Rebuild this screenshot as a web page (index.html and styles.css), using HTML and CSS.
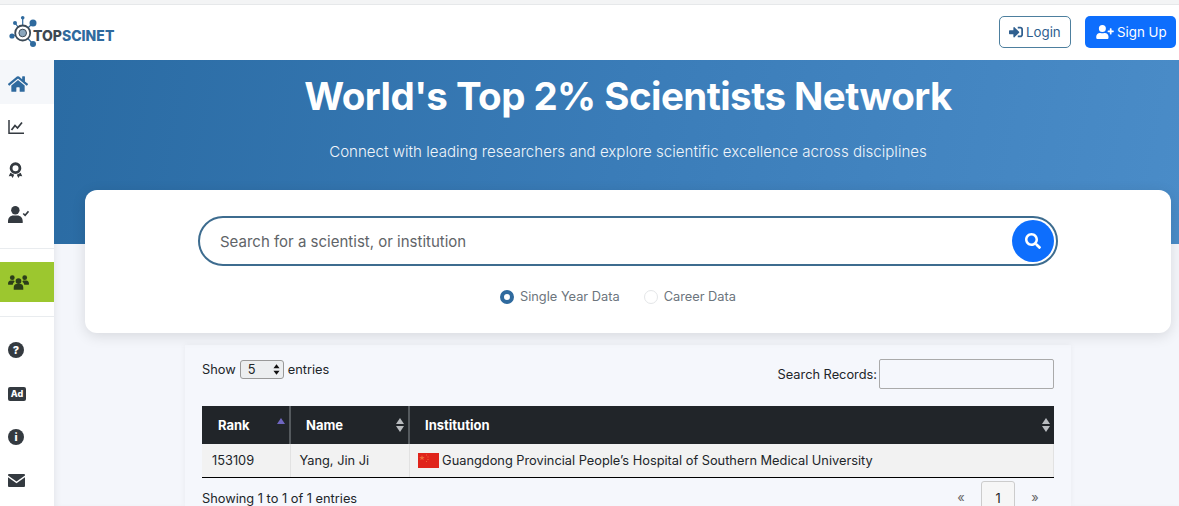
FILE: index.html
```html
<!DOCTYPE html>
<html lang="en">
<head>
    <meta charset="UTF-8">
    <meta name="viewport" content="width=device-width, initial-scale=1.0">
    <title>TopSciNet</title>
    <link rel="stylesheet" href="styles.css">
</head>
<body>
    <header class="topbar">
        <a class="logo" href="#">
            <svg class="logo-mark" viewBox="0 0 30 32" width="30" height="32">
                <g stroke="#2f6a9e" stroke-width="1.2">
                    <line x1="13.700" y1="17" x2="13.700" y2="1.500"/>
                    <line x1="13.700" y1="17" x2="24" y2="7"/>
                    <line x1="13.700" y1="17" x2="6" y2="7"/>
                    <line x1="13.700" y1="17" x2="3" y2="20"/>
                    <line x1="13.700" y1="17" x2="24" y2="28"/>
                </g>
                <circle cx="13.700" cy="1.800" r="1.800" fill="#2f6a9e"/>
                <circle cx="24" cy="7" r="3.500" fill="#2f6a9e"/>
                <circle cx="6" cy="7" r="2" fill="#2f6a9e"/>
                <circle cx="3" cy="20" r="2.600" fill="#2f6a9e"/>
                <circle cx="24" cy="28" r="3" fill="#2f6a9e"/>
                <circle cx="13.700" cy="17" r="7.500" fill="#fff" stroke="#3c4a57" stroke-width="1.800"/>
                <circle cx="13.700" cy="17" r="3.800" fill="#8aa6bd" stroke="#3c4a57" stroke-width="1"/>
            </svg>
            <span class="logo-text"><span class="logo-top">TOP</span>SCINET</span>
        </a>
        <div class="auth">
            <a class="btn btn-login" href="#">
                <svg viewBox="0 0 512 512" width="14" height="14"><path fill="currentColor" d="M416 448h-84c-6.600 0-12-5.400-12-12v-40c0-6.600 5.400-12 12-12h84c17.700 0 32-14.300 32-32V160c0-17.700-14.300-32-32-32h-84c-6.600 0-12-5.400-12-12V76c0-6.600 5.400-12 12-12h84c53 0 96 43 96 96v192c0 53-43 96-96 96zm-47-201L201 79c-15-15-41-4.500-41 17v96H24c-13.300 0-24 10.700-24 24v96c0 13.300 10.700 24 24 24h136v96c0 21.500 26 32 41 17l168-168c9.300-9.400 9.300-24.600 0-34z"/></svg>
                Login
            </a>
            <a class="btn btn-signup" href="#">
                <svg viewBox="0 0 640 512" width="18" height="14"><path fill="currentColor" d="M224 256a128 128 0 1 0 0-256 128 128 0 0 0 0 256zm90 32h-17a174 174 0 0 1-146 0h-17C60 288 0 348 0 422v42c0 26 22 48 48 48h352c26 0 48-22 48-48v-42c0-74-60-134-134-134zM624 200h-64v-64c0-9-7-16-16-16h-32c-9 0-16 7-16 16v64h-64c-9 0-16 7-16 16v32c0 9 7 16 16 16h64v64c0 9 7 16 16 16h32c9 0 16-7 16-16v-64h64c9 0 16-7 16-16v-32c0-9-7-16-16-16z"/></svg>
                Sign Up
            </a>
        </div>
    </header>

    <div class="layout">
        <nav class="sidebar">
            <a class="nav-item nav-home" href="#">
                <svg viewBox="0 0 576 512" width="20" height="18"><path fill="#2f6a9e" d="M280.37 148.26L96 300.11V464a16 16 0 0 0 16 16l112.06-.29a16 16 0 0 0 15.92-16V368a16 16 0 0 1 16-16h64a16 16 0 0 1 16 16v95.64a16 16 0 0 0 16 16.05L464 480a16 16 0 0 0 16-16V300L295.67 148.26a12.19 12.19 0 0 0-15.3 0zM571.6 251.47L488 182.56V44.05a12 12 0 0 0-12-12h-56a12 12 0 0 0-12 12v72.61L318.47 43a48 48 0 0 0-61 0L4.34 251.47a12 12 0 0 0-1.6 16.9l25.5 31A12 12 0 0 0 45.15 301l235.22-193.74a12.19 12.19 0 0 1 15.3 0L530.9 301a12 12 0 0 0 16.9-1.6l25.5-31a12 12 0 0 0-1.7-16.93z"/></svg>
            </a>
            <a class="nav-item" href="#">
                <svg viewBox="0 0 16 16" width="16" height="16" fill="none" stroke="#343a40" stroke-width="1.5"><path d="M1 1v13.200h15"/><path d="M3.500 11l3.500-4.500 2.500 2.500L14 3.500" stroke-width="1.700"/></svg>
            </a>
            <a class="nav-item" href="#">
                <svg viewBox="0 0 16 18" width="15" height="17"><circle cx="8" cy="6.500" r="4.700" fill="none" stroke="#343a40" stroke-width="3"/><path fill="#343a40" d="M2.500 11.500L.8 15l2.700-.2 1.500 2.200 1.600-3.500zM13.500 11.500l1.700 3.500-2.700-.2-1.500 2.200-1.600-3.500z"/></svg>
            </a>
            <a class="nav-item" href="#">
                <svg viewBox="0 0 20 16" width="21" height="17"><circle cx="7" cy="4" r="4" fill="#343a40"/><path fill="#343a40" d="M0 14.500C0 11 2.500 9 5 9h4c2.500 0 5 2 5 5.500V16H0z"/><path fill="none" stroke="#343a40" stroke-width="1.500" d="M14.500 7l1.800 1.800L19.500 5"/></svg>
            </a>
            <div class="nav-divider"></div>
            <a class="nav-item nav-active" href="#">
                <svg viewBox="0 0 22 16" width="21" height="16" fill="#2c3e1a"><circle cx="4.500" cy="3.500" r="2.500"/><circle cx="17.500" cy="3.500" r="2.500"/><path d="M0 10c0-2 1-3.500 3-3.500h3l1 1C6 8.500 5.200 9.500 5 11H1a1 1 0 0 1-1-1zM22 10c0-2-1-3.500-3-3.500h-3l-1 1c1 1 1.800 2 2 3.500h4a1 1 0 0 0 1-1z"/><circle cx="11" cy="7" r="3"/><path d="M6 14c0-2 1-3.800 3-3.800h4c2 0 3 1.800 3 3.800v2H6z"/></svg>
            </a>
            <div class="nav-divider nav-divider-low"></div>
            <a class="nav-item" href="#"><span class="nav-round">?</span></a>
            <a class="nav-item" href="#"><span class="nav-ad">Ad</span></a>
            <a class="nav-item" href="#"><span class="nav-round">i</span></a>
            <a class="nav-item" href="#">
                <svg viewBox="0 0 17 13" width="17" height="13"><path fill="#343a40" d="M0 1a1 1 0 0 1 1-1h15a1 1 0 0 1 1 1v.5L8.500 7.500 0 1.500zM0 3.300v8.700a1 1 0 0 0 1 1h15a1 1 0 0 0 1-1V3.300L8.500 9.200z"/></svg>
            </a>
        </nav>

        <main class="content">
            <section class="hero">
                <h1>World's Top 2% Scientists Network</h1>
                <p>Connect with leading researchers and explore scientific excellence across disciplines</p>
            </section>

            <section class="search-card">
                <div class="search-pill">
                    <input class="search-input" type="text" placeholder="Search for a scientist, or institution">
                    <button class="search-btn">
                        <svg viewBox="0 0 512 512" width="16" height="16"><path fill="#fff" d="M505 442.700L405.300 343c-4.500-4.500-10.600-7-17-7H372c27.600-35.300 44-79.700 44-128C416 93.100 322.900 0 208 0S0 93.100 0 208s93.100 208 208 208c48.300 0 92.700-16.400 128-44v16.300c0 6.400 2.500 12.500 7 17l99.700 99.700c9.400 9.400 24.600 9.400 33.900 0l28.300-28.300c9.400-9.400 9.400-24.600.1-34zM208 336c-70.700 0-128-57.200-128-128 0-70.700 57.200-128 128-128 70.700 0 128 57.200 128 128 0 70.700-57.200 128-128 128z"/></svg>
                    </button>
                </div>
                <div class="year-options">
                    <label class="year-option"><span class="radio radio-on"></span>Single Year Data</label>
                    <label class="year-option"><span class="radio"></span>Career Data</label>
                </div>
            </section>

            <section class="records">
                <div class="records-top">
                    <div class="show-entries">
                        Show
                        <span class="fake-select">5<svg viewBox="0 0 8 12" width="7" height="11"><path fill="#111" d="M4 0l3.500 4.500h-7zM4 12L.5 7.500h7z"/></svg></span>
                        entries
                    </div>
                    <div class="records-search">
                        Search Records:
                        <input type="text" class="records-input">
                    </div>
                </div>
                <table class="records-table">
                    <thead>
                        <tr>
                            <th class="col-rank">Rank<span class="sort sort-asc"></span></th>
                            <th class="col-name">Name<span class="sort"></span></th>
                            <th class="col-inst">Institution<span class="sort"></span></th>
                        </tr>
                    </thead>
                    <tbody>
                        <tr>
                            <td class="cell-rank">153109</td>
                            <td>Yang, Jin Ji</td>
                            <td>
                                <svg class="flag" viewBox="0 0 21 15" width="21" height="15"><rect width="21" height="15" fill="#e0241b"/><path fill="#ee6a3a" d="M4 2l.7 2h2l-1.600 1.200.6 2L4 6 2.300 7.200l.6-2L1.300 4h2zM8 1.500h1v1H8zM9.500 3.500h1v1h-1zM9.500 6h1v1h-1zM8 8h1v1H8z"/></svg>
                                Guangdong Provincial People’s Hospital of Southern Medical University
                            </td>
                        </tr>
                    </tbody>
                </table>
                <div class="records-bottom">
                    <div class="records-info">Showing 1 to 1 of 1 entries</div>
                    <div class="pager">
                        <a href="#">«</a>
                        <a class="pager-current" href="#">1</a>
                        <a href="#">»</a>
                    </div>
                </div>
            </section>
        </main>
    </div>
</body>
</html>
```

FILE: styles.css
```css
* {
    box-sizing: border-box;
}
html, body {
    height: 506px;
    overflow: hidden;
}
body {
    margin: 0;
    padding-top: 4px;
    background: #f3f4f5;
    font-family: Inter, "Liberation Sans", sans-serif;
    color: #212529;
}
a {
    text-decoration: none;
    color: inherit;
}

/* top bar */
.topbar {
    height: 56px;
    background: #fff;
    border-top: 1px solid #e6e8ea;
    display: flex;
    justify-content: space-between;
    align-items: center;
    padding: 0 3px 0 9px;
}
.logo {
    display: flex;
    align-items: center;
    margin-top: 2px;
}
.logo-mark {
    margin-right: -6px;
    margin-top: -4px;
}
.logo-text {
    font-weight: 800;
    font-size: 14px;
    margin-top: 3px;
    color: #2f6a9e;
}
.logo-top {
    color: #3d4852;
}
.auth {
    display: flex;
    gap: 14px;
    margin-top: -1px;
}
.btn {
    height: 32px;
    display: flex;
    align-items: center;
    gap: 3px;
    border-radius: 5px;
    font-size: 13.3px;
    white-space: nowrap;
}
.btn-login {
    width: 72px;
    padding-left: 9px;
    color: #2f5f8f;
    border: 1px solid #4d7f9e;
}
.btn-signup {
    width: 91px;
    padding-left: 11px;
    background: #0d6efd;
    color: #fff;
}

/* layout */
.layout {
    display: flex;
    height: 446px;
}
.sidebar {
    width: 54px;
    flex-shrink: 0;
    background: #fff;
}
.nav-item {
    height: 43.7px;
    display: flex;
    align-items: center;
    padding-left: 8px;
}
.nav-home {
    height: 44px;
    margin-bottom: 1px;
    padding-top: 4px;
    background: #f5f7fa;
}
.nav-divider {
    height: 1px;
    background: #e9ecef;
    margin: 12px 0 13px;
}
.nav-divider-low {
    margin: 14px 0 11px;
}
.nav-active {
    height: 40px;
    background: #9cc72f;
}
.nav-round {
    width: 16px;
    height: 16px;
    border-radius: 50%;
    background: #343a40;
    color: #fff;
    font-size: 11px;
    font-weight: 800;
    display: flex;
    align-items: center;
    justify-content: center;
}
.nav-ad {
    width: 18px;
    height: 14px;
    border-radius: 2px;
    background: #343a40;
    color: #fff;
    font-size: 9px;
    font-weight: 800;
    display: flex;
    align-items: center;
    justify-content: center;
}

/* main column */
.content {
    flex: 1;
    background: #f4f6fb;
    box-shadow: inset 5px 0 6px -3px rgba(0, 0, 0, 0.06);
    min-width: 0;
}
.hero {
    height: 184px;
    background: linear-gradient(100deg, #2a6ba3 0%, #3a7cb8 50%, #4a8cc8 100%);
    text-align: center;
    color: #fff;
    padding: 11px 0 0 23px;
}
.hero h1 {
    margin: 0;
    font-size: 38.5px;
    letter-spacing: -0.55px;
    line-height: 50px;
    font-weight: 700;
}
.hero p {
    margin: 20px 0 0;
    font-size: 15.1px;
    line-height: 22px;
    font-weight: 300;
    color: #f0f5fa;
}
.search-card {
    margin: -54px 8px 0 31px;
    height: 143px;
    background: #fff;
    border-radius: 12px;
    box-shadow: 0 3px 14px rgba(0, 0, 0, 0.12);
    padding-top: 26px;
    position: relative;
}
.search-pill {
    width: 860px;
    height: 50px;
    margin-left: 113px;
    border: 2px solid #3d6c8f;
    border-radius: 25px;
    display: flex;
    align-items: center;
    justify-content: space-between;
    padding: 0 2px 0 20px;
}
.search-input {
    flex: 1;
    border: 0;
    outline: 0;
    padding: 0;
    background: none;
    font: 15px Inter, "Liberation Sans", sans-serif;
    color: #555;
}
.search-input::placeholder {
    color: #5f6468;
    opacity: 1;
}
.search-btn {
    width: 42px;
    height: 42px;
    border: 0;
    border-radius: 50%;
    background: #0d6efd;
    display: flex;
    align-items: center;
    justify-content: center;
    padding: 0;
}
.year-options {
    display: flex;
    justify-content: center;
    gap: 24px;
    margin-top: 23px;
    padding-right: 20px;
    font-size: 12.8px;
    color: #6c757d;
}
.year-option {
    display: flex;
    align-items: center;
    gap: 6px;
}
.radio {
    width: 14px;
    height: 14px;
    border-radius: 50%;
    border: 1px solid #e4e6e8;
}
.radio-on {
    border: 4px solid #2f6a9e;
}

/* records table */
.records {
    width: 886px;
    height: 161px;
    margin: 12px 0 0 131px;
    padding: 14px 17px 0;
    background: #f5f7fc;
    box-shadow: 0 0 6px rgba(0, 0, 0, 0.05);
    font-size: 12.8px;
    overflow: hidden;
}
.records-top {
    display: flex;
    justify-content: space-between;
    height: 47px;
}
.show-entries {
    display: flex;
    align-items: center;
    gap: 4px;
    height: 20px;
}
.fake-select {
    width: 44px;
    height: 19px;
    border: 1px solid #999;
    border-radius: 3px;
    background: #eceef0;
    display: flex;
    align-items: center;
    justify-content: space-between;
    padding: 0 3px 0 7px;
}
.records-search {
    display: flex;
    align-items: center;
    gap: 2px;
    height: 30px;
}
.records-input {
    width: 175px;
    height: 30px;
    border: 1px solid #aaa;
    border-radius: 2px;
    background: none;
}
.records-table {
    width: 852px;
    border-collapse: collapse;
    table-layout: fixed;
}
.records-table th {
    height: 38px;
    background: #212529;
    color: #fff;
    text-align: left;
    font-size: 13px;
    font-weight: 700;
    padding: 0 15px;
    border-right: 2px solid #555a5e;
    position: relative;
}
.records-table th:last-child {
    border-right: 0;
}
.records-table .col-rank {
    width: 88px;
    padding-left: 16px;
}
.col-name {
    width: 119px;
}
.records-table td {
    height: 33px;
    background: #f2f2f2;
    padding: 1px 9px 0;
    border-bottom: 1px solid #000;
    border-right: 1px solid #e2e2e2;
}
.records-table .cell-rank {
    padding-left: 10px;
}
.flag {
    vertical-align: -3px;
    margin-left: -1px;
}
.sort {
    position: absolute;
    right: 4px;
    top: 12px;
    width: 8px;
    height: 14px;
}
.sort::before,
.sort::after {
    content: "";
    position: absolute;
    left: 0;
    border-left: 4px solid transparent;
    border-right: 4px solid transparent;
}
.sort::before {
    top: 0;
    border-bottom: 6px solid #b9bcbf;
}
.sort::after {
    bottom: 0;
    border-top: 6px solid #b9bcbf;
}
.sort-asc::before {
    border-bottom-color: #6f66c0;
}
.sort-asc::after {
    display: none;
}
.records-bottom {
    display: flex;
    justify-content: space-between;
    margin-top: 3px;
}
.records-info {
    margin-top: 10px;
    line-height: 15px;
}
.pager {
    display: flex;
    align-items: flex-start;
    margin-right: 2px;
    color: #666;
}
.pager a {
    width: 34px;
    height: 32px;
    display: flex;
    align-items: flex-start;
    justify-content: center;
    margin-left: 3px;
    padding-top: 9px;
    line-height: 15px;
}
.pager .pager-current {
    border: 1px solid #ccc;
    border-radius: 3px;
    background: #f6f6f6;
    color: #222;
}
```
